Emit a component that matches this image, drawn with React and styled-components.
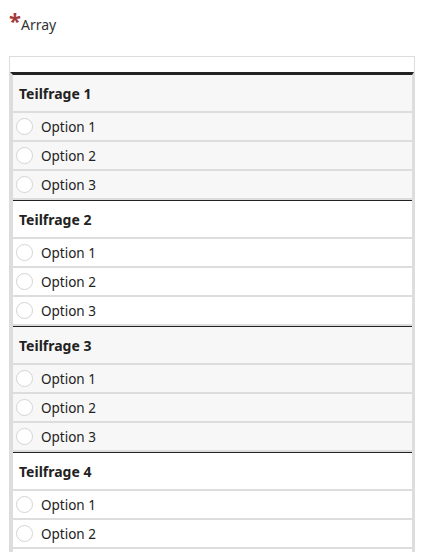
import React from 'react';
import styled, { createGlobalStyle } from 'styled-components';

const Global = createGlobalStyle`
  body {
    margin: 0;
    background: #fff;
    font-family: "Noto Sans", "Open Sans", sans-serif;
    color: #222;
  }
`;

const Page = styled.div`
  width: 426px;
  height: 552px;
  overflow: hidden;
  padding: 0 11px 0 9px;
  box-sizing: border-box;
`;

const Label = styled.div`
  display: flex;
  align-items: flex-start;
  padding-top: 10px;
  height: 56px;
  box-sizing: border-box;
  font-size: 14px;
  color: #333;
`;

const Star = styled.span`
  color: #a33a3a;
  font-size: 22px;
  font-weight: bold;
  line-height: 16px;
  margin-top: 2px;
`;

const LabelText = styled.span`
  line-height: 20px;
  margin-top: 5px;
`;

const Box = styled.div`
  border: 1px solid #ddd;
  border-bottom: none;
  padding-top: 15px;
`;

const Table = styled.div`
  border-top: 3px solid #222;
  border-left: 3px solid #ddd;
  border-right: 2px solid #ddd;
`;

const Group = styled.div`
  background: ${p => (p.$odd ? '#f7f7f7' : '#fff')};
  border-bottom: 1px solid #222;
`;

const Header = styled.div`
  height: 36px;
  border-bottom: 2px solid #ddd;
  display: flex;
  align-items: center;
  padding-left: 6px;
  font-size: 14px;
  font-weight: bold;
  color: #222;
`;

const Row = styled.div`
  height: 27px;
  border-bottom: 2px solid #ddd;
  display: flex;
  align-items: center;
  padding-left: 3px;
  font-size: 13.5px;
  color: #222;
`;

const Radio = styled.span`
  width: 15px;
  height: 15px;
  border-radius: 50%;
  border: 1px solid #d4d4d4;
  background: #fff;
  margin-right: 8px;
  flex-shrink: 0;
`;

const groups = [1, 2, 3, 4];
const options = ['Option 1', 'Option 2', 'Option 3'];

export default function App() {
  return (
    <Page>
      <Global />
      <Label>
        <Star>*</Star>
        <LabelText>Array</LabelText>
      </Label>
      <Box>
        <Table>
          {groups.map(g => (
            <Group key={g} $odd={g % 2 === 1}>
              <Header>Teilfrage {g}</Header>
              {options.map(o => (
                <Row key={o}>
                  <Radio />
                  {o}
                </Row>
              ))}
            </Group>
          ))}
        </Table>
      </Box>
    </Page>
  );
}
